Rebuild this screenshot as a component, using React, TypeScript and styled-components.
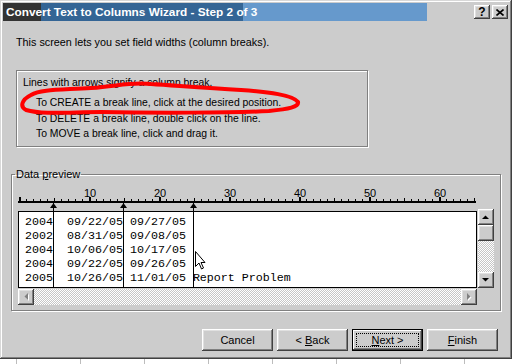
import React from "react";
import styled, { createGlobalStyle } from "styled-components";

const GlobalStyle = createGlobalStyle`
  html, body {
    margin: 0;
    padding: 0;
  }
  body {
    width: 516px;
    height: 364px;
    overflow: hidden;
    background: #fff;
    font-family: "Liberation Sans", Arial, sans-serif;
  }
`;

const Desktop = styled.div`
  width: 516px;
  height: 364px;
  background: repeating-linear-gradient(
    to right,
    transparent 0 16px,
    #bdbdbd 16px 17px,
    transparent 17px 64px
  );
`;

const Dialog = styled.div`
  width: 512px;
  height: 359px;
  box-sizing: border-box;
  padding: 3px;
  background: #cccccc;
  box-shadow: inset -1px -1px #404040, inset 1px 1px #d8d8d8,
    inset -2px -2px #808080, inset 2px 2px #fff;
  display: flex;
  flex-direction: column;
`;

const TitleBar = styled.div`
  height: 18px;
  display: flex;
  align-items: center;
  padding: 0 1px 0 3px;
  background: linear-gradient(
    to right,
    #333333 0 38px,
    #346595 38px 240px,
    #6699cc 240px 424px,
    transparent 424px
  );
`;

const TitleText = styled.div`
  flex: 1;
  color: #fff;
  font-weight: bold;
  font-size: 11.8px;
  white-space: nowrap;
`;

const raised = `
  background: #cccccc;
  box-shadow: inset -1px -1px #404040, inset 1px 1px #fff,
    inset -2px -2px #808080, inset 2px 2px #e0e0e0;
`;

const TitleButton = styled.div`
  ${raised}
  width: 16px;
  height: 14px;
  margin-left: 2px;
  display: flex;
  align-items: center;
  justify-content: center;
  font-weight: bold;
  font-size: 12px;
  line-height: 14px;
  color: #000;
`;

const Intro = styled.div`
  margin: 15px 0 0 13px;
  font-size: 10.8px;
  line-height: 13px;
  color: #000;
`;

const etched = `
  border: 1px solid #808080;
  box-shadow: inset 1px 1px #fff, 1px 1px #fff;
`;

const HintBox = styled.div`
  ${etched}
  position: relative;
  box-sizing: border-box;
  width: 352px;
  height: 77px;
  margin: 21px 0 0 13px;
  padding: 4px 0 0 6px;
  font-size: 10.4px;
  color: #000;
`;

const HintLine = styled.div<{ $indent?: boolean }>`
  line-height: ${({ $indent }) => ($indent ? "15.5px" : "16px")};
  margin-left: ${({ $indent }) => ($indent ? "13px" : "0")};
  margin-bottom: ${({ $indent }) => ($indent ? "0" : "4px")};
  white-space: nowrap;
`;

const Scribble = styled.svg`
  position: absolute;
  left: -1px;
  top: -1px;
  overflow: visible;
  pointer-events: none;
`;

const PreviewGroup = styled.fieldset`
  ${etched}
  box-sizing: border-box;
  width: 490px;
  height: 144px;
  margin: 20px 0 0 8px;
  padding: 4px 6px 0 6px;
  min-width: 0;
`;

const Legend = styled.legend`
  padding: 0 1px;
  margin-left: -3px;
  font-size: 11px;
  line-height: 14px;
  color: #000;
`;

const Preview = styled.div`
  position: relative;
  display: flex;
  flex-direction: column;
`;

const Ruler = styled.svg`
  display: block;
`;

const DataRow = styled.div`
  display: flex;
  align-items: flex-start;
`;

const DataBox = styled.div`
  box-sizing: border-box;
  width: 459px;
  height: 77px;
  border: 1px solid #000;
  background: #fff;
  padding: 3px 0 0 6px;
  font-family: "Liberation Mono", "Courier New", monospace;
  font-size: 11.67px;
  line-height: 14px;
  white-space: pre;
  color: #000;
`;

const hatch = `
  background: repeating-conic-gradient(#fff 0 25%, #c6c6c6 0 50%) 0 0 / 2px 2px;
`;

const VScroll = styled.div`
  width: 16px;
  height: 79px;
  margin: -2px 0 0 1px;
  display: flex;
  flex-direction: column;
  ${hatch}
`;

const HScroll = styled.div`
  width: 459px;
  height: 16px;
  margin-top: 1px;
  display: flex;
  ${hatch}
`;

const ScrollButton = styled.div`
  ${raised}
  width: 16px;
  height: 16px;
  flex-shrink: 0;
  display: flex;
  align-items: center;
  justify-content: center;
`;

const Track = styled.div`
  flex: 1;
`;

const Overlay = styled.svg`
  position: absolute;
  left: 0;
  top: 0;
  pointer-events: none;
  overflow: visible;
`;

const ButtonRow = styled.div`
  margin-top: 18px;
  padding-right: 11px;
  display: flex;
  justify-content: flex-end;
  gap: 4px;
`;

const Button = styled.div<{ $primary?: boolean }>`
  ${raised}
  box-sizing: border-box;
  width: 71px;
  height: 22px;
  padding: 4px;
  display: flex;
  font-size: 11px;
  color: #000;
  ${({ $primary }) =>
    $primary &&
    `
    box-shadow: inset 0 0 0 1px #000, inset -2px -2px #404040, inset 2px 2px #fff,
      inset -3px -3px #808080;
  `}
`;

const ButtonLabel = styled.span<{ $focus?: boolean }>`
  flex: 1;
  display: flex;
  align-items: center;
  justify-content: center;
  border: 1px dotted ${({ $focus }) => ($focus ? "#000" : "transparent")};
`;

const rows = [
  "2004  09/22/05 09/27/05",
  "2002  08/31/05 09/08/05",
  "2004  10/06/05 10/17/05",
  "2004  09/22/05 09/26/05",
  "2005  10/26/05 11/01/05 Report Problem",
];

const breaks = [4, 14, 24];

function Arrow({ dir, disabled }: { dir: "up" | "down" | "left" | "right"; disabled?: boolean }) {
  const pts = {
    up: "0,4 7,4 3.5,0.5",
    down: "0,0 7,0 3.5,3.5",
    left: "4,0 4,7 0.5,3.5",
    right: "0,0 0,7 3.5,3.5",
  }[dir];
  const w = dir === "up" || dir === "down" ? 7 : 4;
  const h = dir === "up" || dir === "down" ? 4 : 7;
  return (
    <svg width={w + 1} height={h + 1}>
      {disabled && <polygon points={pts} fill="#fff" transform="translate(1 1)" />}
      <polygon points={pts} fill={disabled ? "#808080" : "#000"} />
    </svg>
  );
}

function RulerDrawing() {
  const ticks = [];
  for (let i = 0; i <= 65; i++) {
    const x = 1 + i * 7;
    if (i % 10 === 0) ticks.push(<rect key={i} x={x} y={12} width={2} height={4} />);
    else if (i % 5 === 0) ticks.push(<rect key={i} x={x} y={13} width={1} height={3} />);
    else ticks.push(<rect key={i} x={x} y={14} width={1} height={2} />);
  }
  return (
    <Ruler width={459} height={26}>
      <g fill="#000">
        {ticks}
        <rect x={0} y={16} width={458} height={2} />
      </g>
      {[10, 20, 30, 40, 50, 60].map((n) => (
        <text
          key={n}
          x={2 + n * 7}
          y={12}
          textAnchor="middle"
          fontSize={11}
          fontFamily="Liberation Sans, Arial, sans-serif"
          fill="#000"
        >
          {n}
        </text>
      ))}
    </Ruler>
  );
}

export default function App() {
  return (
    <>
      <GlobalStyle />
      <Desktop>
        <Dialog>
          <TitleBar>
            <TitleText>Convert Text to Columns Wizard - Step 2 of 3</TitleText>
            <TitleButton>?</TitleButton>
            <TitleButton>
              <svg width={8} height={7}>
                <path d="M0.5 0.5 L7.5 6.5 M7.5 0.5 L0.5 6.5" stroke="#000" strokeWidth={1.6} />
              </svg>
            </TitleButton>
          </TitleBar>

          <Intro>This screen lets you set field widths (column breaks).</Intro>

          <HintBox>
            <HintLine>Lines with arrows signify a column break.</HintLine>
            <HintLine $indent>To CREATE a break line, click at the desired position.</HintLine>
            <HintLine $indent>To DELETE a break line, double click on the line.</HintLine>
            <HintLine $indent>To MOVE a break line, click and drag it.</HintLine>
            <Scribble width={352} height={77}>
              <g transform="translate(-15 -69)">
                <path
                  d="M30 94 C40 88, 60 89, 90 87 C118 85, 128 81, 150 83 C180 85, 205 87, 240 89 C268 91, 292 94, 297 101 C298 106, 288 108, 268 110 C230 112, 150 112, 100 111 C70 111, 42 114, 25 109 C19 106, 20 99, 30 94 Z"
                  fill="none"
                  stroke="#ff0000"
                  strokeWidth={4}
                  strokeLinejoin="round"
                />
              </g>
            </Scribble>
          </HintBox>

          <PreviewGroup>
            <Legend>
              Data <u>p</u>review
            </Legend>
            <Preview>
              <RulerDrawing />
              <DataRow>
                <DataBox>{rows.join("\n")}</DataBox>
                <VScroll>
                  <ScrollButton>
                    <Arrow dir="up" />
                  </ScrollButton>
                  <ScrollButton />
                  <Track />
                  <ScrollButton>
                    <Arrow dir="down" />
                  </ScrollButton>
                </VScroll>
              </DataRow>
              <HScroll>
                <ScrollButton>
                  <Arrow dir="left" disabled />
                </ScrollButton>
                <Track />
                <ScrollButton>
                  <Arrow dir="right" disabled />
                </ScrollButton>
              </HScroll>
              <Overlay width={459} height={103}>
                {breaks.map((c) => {
                  const x = 7 + c * 7;
                  return (
                    <g key={c} fill="#000">
                      <polygon points={`${x + 0.5},18 ${x - 3},23 ${x + 4},23`} />
                      <rect x={x} y={18} width={1} height={85} />
                    </g>
                  );
                })}
                <path
                  transform="translate(177 66)"
                  d="M0.5 0.5 L0.5 15.5 L4 12 L6.5 18 L8.5 17 L6 11.5 L10 11.5 Z"
                  fill="#fff"
                  stroke="#000"
                  strokeWidth={1}
                  strokeLinejoin="miter"
                />
              </Overlay>
            </Preview>
          </PreviewGroup>

          <ButtonRow>
            <Button>
              <ButtonLabel>Cancel</ButtonLabel>
            </Button>
            <Button>
              <ButtonLabel>
                &lt;&nbsp;<u>B</u>ack
              </ButtonLabel>
            </Button>
            <Button $primary>
              <ButtonLabel $focus>
                <u>N</u>ext&nbsp;&gt;
              </ButtonLabel>
            </Button>
            <Button>
              <ButtonLabel>
                <u>F</u>inish
              </ButtonLabel>
            </Button>
          </ButtonRow>
        </Dialog>
      </Desktop>
    </>
  );
}
